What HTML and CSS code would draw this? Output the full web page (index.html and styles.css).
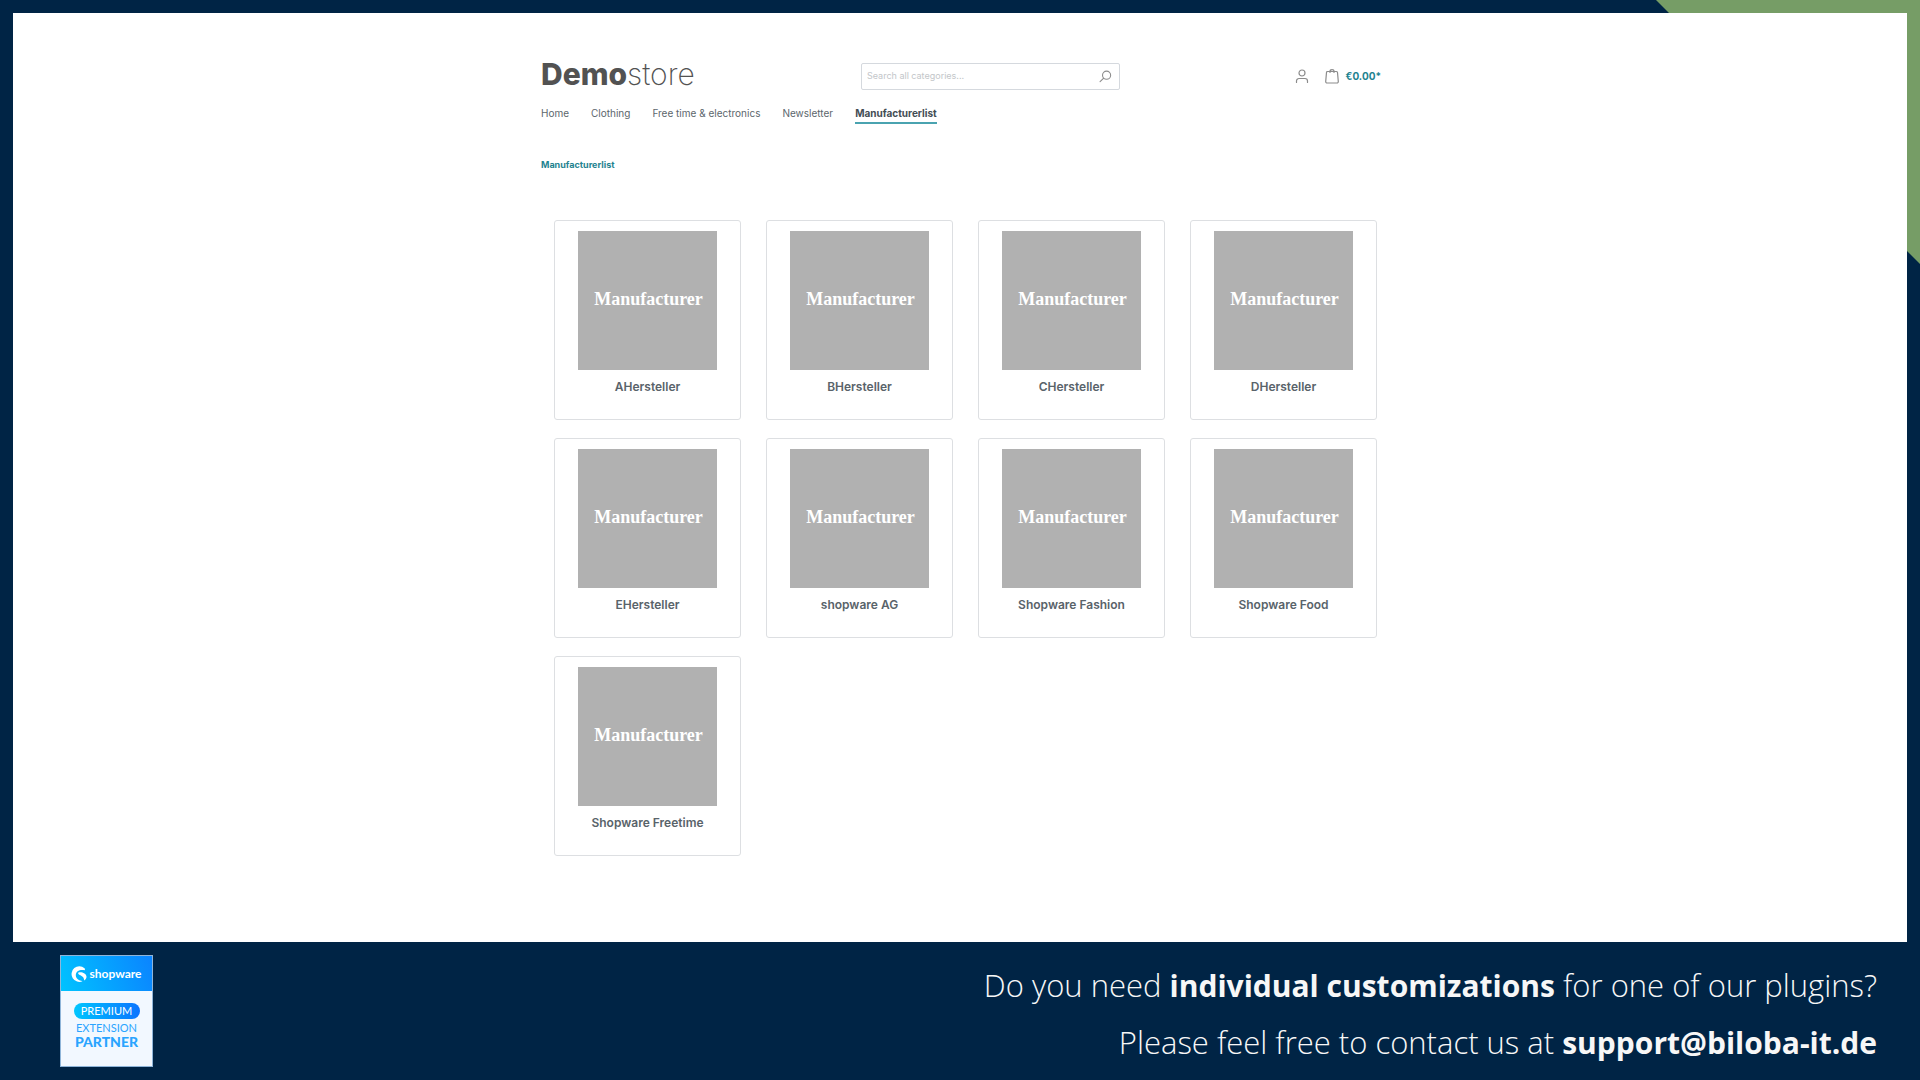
FILE: index.html
```html
<!DOCTYPE html>
<html lang="en">
<head>
<meta charset="utf-8">
<title>Manufacturerlist | Demostore</title>
<meta name="viewport" content="width=device-width, initial-scale=1">
<link rel="stylesheet" href="styles.css">
</head>
<body>
<div class="corner"></div>
<div class="store">
  <div class="container">
    <header class="header">
      <a class="logo" href="#"><strong>Demo</strong>store</a>
      <form class="search" role="search">
        <input class="search-input" type="search" placeholder="Search all categories..." aria-label="Search all categories">
        <button class="search-button" type="button" aria-label="Search">
          <svg class="icon-search" viewBox="0 0 24 24"><circle cx="14" cy="9.500" r="7.500"/><path d="M8.700 14.800 2 21.500"/></svg>
        </button>
      </form>
      <div class="actions">
        <button class="account" type="button" aria-label="Your account">
          <svg class="icon" viewBox="0 0 14 15"><circle cx="7" cy="4" r="3"/><path d="M1.500 13.500v-1.500a2.500 2.500 0 0 1 2.500-2.500h6a2.500 2.500 0 0 1 2.500 2.500v1.500"/></svg>
        </button>
        <a class="cart" href="#" aria-label="Shopping cart">
          <svg class="icon" viewBox="0 0 14 15"><path d="M2.500 2.500h9a1 1 0 0 1 1 1l.8 9a1.400 1.400 0 0 1-1.400 1.500H2.100A1.400 1.400 0 0 1 .7 12.500l.8-9a1 1 0 0 1 1-1zM5 3.500V2.500a2 1.800 0 0 1 4 0v1"/></svg>
          <span class="total">€0.00*</span>
        </a>
      </div>
    </header>
    <nav class="nav" aria-label="Main">
      <a href="#">Home</a>
      <a href="#">Clothing</a>
      <a href="#">Free time &amp; electronics</a>
      <a href="#">Newsletter</a>
      <a class="active" href="#" aria-current="page">Manufacturerlist</a>
    </nav>
    <nav class="breadcrumb" aria-label="Breadcrumb"><a href="#">Manufacturerlist</a></nav>
    <main class="grid">
      <a class="card" href="#"><span class="thumb">Manufacturer</span><span class="name">AHersteller</span></a>
      <a class="card" href="#"><span class="thumb">Manufacturer</span><span class="name">BHersteller</span></a>
      <a class="card" href="#"><span class="thumb">Manufacturer</span><span class="name">CHersteller</span></a>
      <a class="card" href="#"><span class="thumb">Manufacturer</span><span class="name">DHersteller</span></a>
      <a class="card" href="#"><span class="thumb">Manufacturer</span><span class="name">EHersteller</span></a>
      <a class="card" href="#"><span class="thumb">Manufacturer</span><span class="name">shopware AG</span></a>
      <a class="card" href="#"><span class="thumb">Manufacturer</span><span class="name">Shopware Fashion</span></a>
      <a class="card" href="#"><span class="thumb">Manufacturer</span><span class="name">Shopware Food</span></a>
      <a class="card" href="#"><span class="thumb">Manufacturer</span><span class="name">Shopware Freetime</span></a>
    </main>
  </div>
</div>
<footer class="footer">
  <div class="badge">
    <div class="badge-top">
      <svg class="badge-mark" viewBox="0 0 16 16"><path d="M13.500 2.200A7.800 7.800 0 1 0 11.500 15.200C8 14.600 4.800 12.800 4.800 9.300 4.800 5.200 8.500 3.500 13.500 4.200c.6.100.7-1.500 0-2z"/><path d="M8 6.300c3.200-.6 7.300 1.200 7.500 4.200.1 1.800-.9 3.200-2.300 4-.2-3.800-2.500-4.500-4.500-5.500C7 8.200 6.500 6.700 8 6.300z"/></svg>
      <span>shopware</span>
    </div>
    <div class="badge-body">
      <span class="pill">PREMIUM</span>
      <span class="extension">EXTENSION</span>
      <strong class="partner">PARTNER</strong>
    </div>
  </div>
  <div class="message">
    <p>Do you need <strong>individual customizations</strong> for one of our plugins?</p>
    <p>Please feel free to contact us at <strong>support@biloba-it.de</strong></p>
  </div>
</footer>
</body>
</html>
```
FILE: styles.css
```css
* { box-sizing: border-box; }

body {
  margin: 0;
  min-height: 100vh;
  display: flex;
  flex-direction: column;
  position: relative;
  background: #002445;
  font-family: Inter, "Liberation Sans", sans-serif;
  color: #4a545b;
}

a { color: inherit; text-decoration: none; }
button { padding: 0; border: 0; background: none; font: inherit; cursor: pointer; }

/* Green triangle in the top right corner, behind the store panel */
.corner {
  position: absolute;
  top: 0;
  right: 0;
  width: 264px;
  height: 264px;
  background: #769d66;
  clip-path: polygon(0 0, 100% 0, 100% 100%);
}

.store {
  position: relative;
  flex: 1;
  margin: 13px 13px 0;
  padding: 46px 20px 40px 22px;
  background: #fff;
}

.container { max-width: 840px; margin: 0 auto; }

.header {
  display: grid;
  grid-template-columns: 320px 259px 1fr;
  align-items: center;
  height: 34px;
}

.logo { padding-bottom: 4px; font-size: 30px; line-height: 30px; font-weight: 200; color: #525252; }
.logo strong { font-weight: 800; }

.search {
  display: flex;
  align-items: center;
  height: 27px;
  border: 1px solid #d5d9de;
  border-radius: 2px;
}
.search-input {
  flex: 1;
  min-width: 0;
  padding: 0 5px;
  border: 0;
  background: none;
  font: 9px/16px Inter, "Liberation Sans", sans-serif;
  color: #4a545b;
}
.search-input::placeholder { color: #c3c6c9; }
.search-button { display: flex; padding: 0 7px; }
.icon-search { width: 13px; height: 13px; fill: none; stroke: #8c8c8c; stroke-width: 2; stroke-linecap: round; }

.actions { display: flex; justify-content: flex-end; align-items: center; gap: 16px; }
.account, .cart { display: flex; align-items: center; gap: 7px; }
.icon { width: 14px; height: 15px; overflow: visible; fill: none; stroke: #8c8c8c; stroke-width: 1.2; stroke-linecap: round; stroke-linejoin: round; }
.total { font-size: 10px; line-height: 16px; font-weight: 700; color: #1f8390; }

.nav { display: flex; gap: 22px; margin-top: 11px; font-size: 10px; line-height: 18px; color: #5c666c; }
.nav .active { font-weight: 700; color: #434d54; border-bottom: 2px solid #4aa3b0; }

.breadcrumb { margin-top: 33px; font-size: 9px; line-height: 16px; font-weight: 700; color: #1f8390; }

.grid {
  display: grid;
  grid-template-columns: repeat(4, 1fr);
  gap: 18px 25px;
  margin: 47px 4px 0 13px;
}

.card {
  display: flex;
  flex-direction: column;
  align-items: center;
  height: 200px;
  padding-top: 10px;
  border: 1px solid #dddfe2;
  border-radius: 3px;
}
.thumb {
  display: flex;
  align-items: center;
  justify-content: center;
  width: 139px;
  height: 139px;
  padding: 0 0 4px 2px;
  background: #b1b1b1;
  font: bold 18px/22px "Liberation Serif", serif;
  color: #fff;
}
.name { margin-top: 8px; font-size: 12px; line-height: 18px; font-weight: 600; color: #59636a; }

.footer {
  display: flex;
  justify-content: space-between;
  align-items: flex-start;
  padding: 13px 43px 0 60px;
  height: 138px;
}

.badge { width: 93px; height: 112px; border: 1px solid #8fb5d9; background: #f2f8ff; }
.badge-top {
  display: flex;
  align-items: center;
  justify-content: center;
  gap: 2px;
  height: 35px;
  background: linear-gradient(70deg, #00c3ff, #0b84ff);
  font: bold 12px/16px Lato, sans-serif;
  color: #fff;
}
.badge-mark { width: 16px; height: 16px; fill: #fff; }
.badge-body { display: flex; flex-direction: column; align-items: center; padding-top: 12px; font-family: Lato, sans-serif; color: #2aa4ff; }
.pill {
  width: 66px;
  border-radius: 8px;
  background: linear-gradient(90deg, #00c6ff, #0b74ff);
  font-size: 11px;
  line-height: 16px;
  text-align: center;
  color: #fff;
}
.extension { margin-top: 2px; font-size: 11px; line-height: 14px; }
.partner { font-size: 14px; line-height: 14px; font-weight: 900; }

.message { padding-top: 2px; text-align: right; font: 300 31px/57px "Open Sans", "Noto Sans", sans-serif; color: #f7f7f7; }
.message p { margin: 0; }
.message strong { font-size: 30px; font-weight: 700; }
```
